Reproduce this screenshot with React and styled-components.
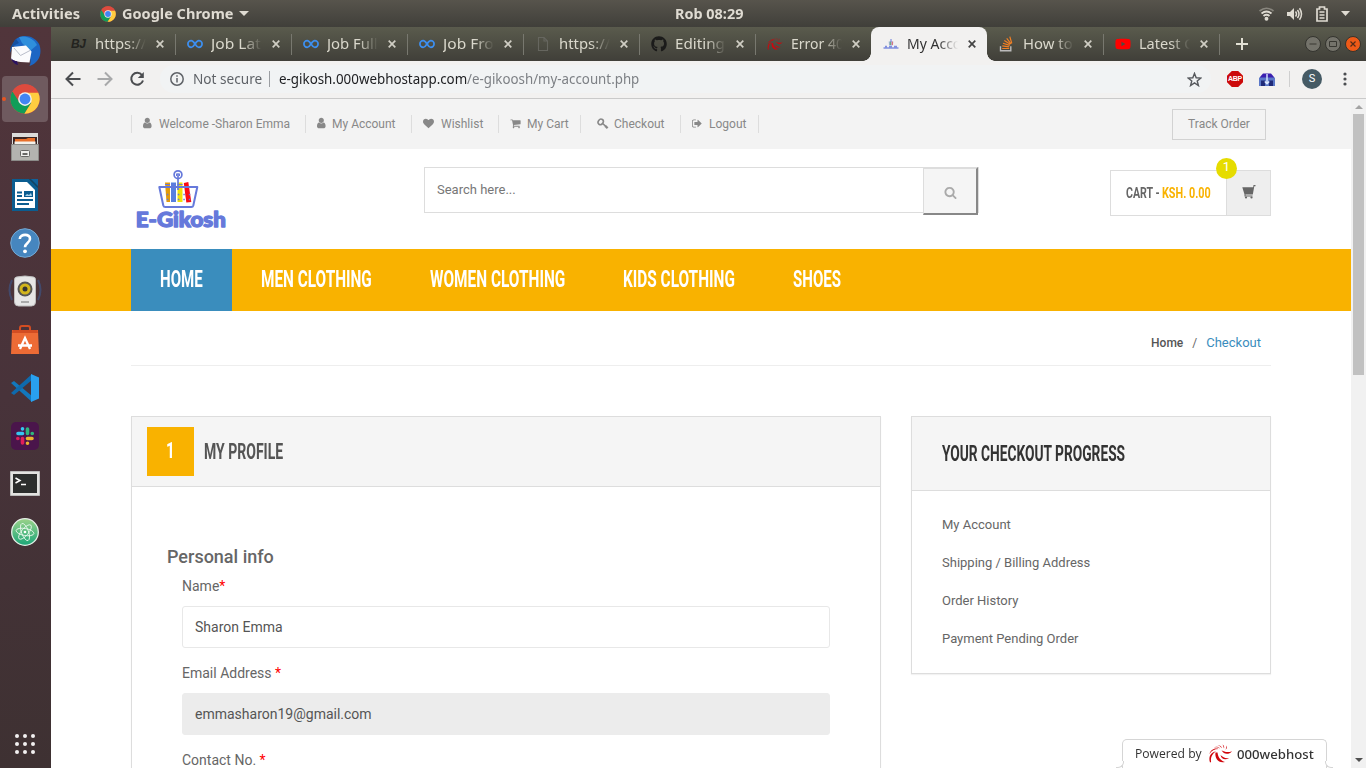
import React, { useLayoutEffect, useRef, useState } from "react";
import styled, { createGlobalStyle, css } from "styled-components";
import { FaGithub, FaYoutube } from "react-icons/fa";

const Global = createGlobalStyle`
  * { box-sizing: border-box; }
  html, body { margin: 0; padding: 0; }
  body { width: 1366px; height: 768px; overflow: hidden; background: #fff; font-family: Roboto, "Liberation Sans", sans-serif; color: #666; }
  svg { display: block; flex: none; }
`;

const ui = `"Noto Sans", "Open Sans", sans-serif`;

/* ---------- text squeezed horizontally to a given width ---------- */
const FitBox = styled.span`
  display: inline-block;
  flex: none;
  width: ${(p) => p.$w}px;
  white-space: nowrap;
`;
const FitInner = styled.span`
  display: inline-block;
  transform-origin: 0 50%;
`;
function Fit({ w, children }) {
  const ref = useRef(null);
  const [scale, setScale] = useState(1);
  useLayoutEffect(() => {
    setScale(w / ref.current.offsetWidth);
  }, [w]);
  return (
    <FitBox $w={w}>
      <FitInner ref={ref} style={{ transform: `scaleX(${scale})` }}>{children}</FitInner>
    </FitBox>
  );
}

/* ---------- desktop shell ---------- */
const Desktop = styled.div`
  width: 1366px;
  height: 768px;
  display: flex;
  flex-direction: column;
  overflow: hidden;
`;
const SystemBar = styled.header`
  height: 27px;
  flex: none;
  display: grid;
  grid-template-columns: 663px auto 1fr;
  align-items: center;
  background: linear-gradient(#57544c, #403f3a);
  color: #dfdbd2;
  font: 700 14px/26px ${ui};
  padding: 0 16px 0 12px;
`;
const BarGroup = styled.div`
  display: flex;
  align-items: center;
  justify-content: ${(p) => (p.$end ? "flex-end" : "flex-start")};
  height: 26px;
`;
const AppMenu = styled.div`
  display: flex;
  align-items: center;
  gap: 6px;
  margin-left: 20px;
`;
const Tray = styled.div`
  display: flex;
  align-items: center;
  gap: 12px;
`;
const Workspace = styled.div`
  flex: 1;
  min-height: 0;
  display: flex;
`;
const Dock = styled.nav`
  width: 51px;
  flex: none;
  display: flex;
  flex-direction: column;
  align-items: center;
  background: linear-gradient(#51353b, #48333a 50%, #3e3132);
  padding: 1px 1px 0 0;
`;
const DockItem = styled.div`
  width: 46px;
  height: 46px;
  margin-bottom: 2.1px;
  flex: none;
  display: flex;
  align-items: center;
  justify-content: center;
  border-radius: 4px;
  position: relative;
  ${(p) => p.$active && css`
    background: #6f5a5f;
    &::before {
      content: "";
      position: absolute;
      left: 0;
      top: 21px;
      width: 4px;
      height: 4px;
      border-radius: 50%;
      background: #e95420;
    }
  `}
`;
const AppsGrid = styled.div`
  margin-top: auto;
  margin-bottom: 14px;
  display: grid;
  grid-template-columns: repeat(3, 4px);
  gap: 4px;
`;
const Dot = styled.i`
  width: 4px;
  height: 4px;
  border-radius: 50%;
  background: #f3f1f1;
`;

/* ---------- browser ---------- */
const Browser = styled.main`
  flex: 1;
  min-width: 0;
  display: flex;
  flex-direction: column;
`;
const TabStrip = styled.div`
  height: 34px;
  flex: none;
  display: flex;
  align-items: center;
  background: linear-gradient(#5a5b4d, #403f39);
  padding: 0 5px 0 8px;
`;
const TabBox = styled.div`
  width: 116px;
  height: 34px;
  flex: none;
  display: flex;
  align-items: center;
  padding-left: 12px;
  position: relative;
  color: ${(p) => (p.$active ? "#333" : "#dad8cc")};
  font: 400 14px/34px ${ui};
  ${(p) => p.$line && css`
    &::after {
      content: "";
      position: absolute;
      right: -1px;
      top: 7px;
      width: 1px;
      height: 21px;
      background: #78786f;
    }
  `}
  ${(p) => p.$active && css`
    background: #f2f1f0;
    border-radius: 8px 8px 0 0;
    &::before, &::after {
      content: "";
      position: absolute;
      bottom: 0;
      width: 8px;
      height: 8px;
      background: radial-gradient(circle at 0 0, transparent 7.5px, #f2f1f0 8px);
    }
    &::before { left: -8px; }
    &::after { right: -8px; transform: scaleX(-1); }
  `}
`;
const TabTitle = styled.span`
  width: 51px;
  margin: 0 10px 0 8px;
  white-space: nowrap;
  -webkit-mask-image: linear-gradient(90deg, #000 62%, transparent 100%);
  mask-image: linear-gradient(90deg, #000 62%, transparent 100%);
`;
const WindowButtons = styled.div`
  display: flex;
  gap: 4px;
  margin-left: auto;
`;
const Toolbar = styled.div`
  height: 38px;
  flex: none;
  display: flex;
  align-items: center;
  background: #f2f1f0;
  border-bottom: 1px solid #cacaca;
  padding: 0 19px 1px 14px;
`;
const NavButtons = styled.div`
  display: flex;
  gap: 16px;
`;
const AddressBar = styled.div`
  flex: 1;
  height: 28px;
  margin: 0 16px 0 15px;
  padding: 0 9px 0 10px;
  display: flex;
  align-items: center;
  border-radius: 14px;
  background: #f1f3f4;
  color: #5f6368;
  font: 400 14px/28px ${ui};
`;
const SecureLabel = styled.span`
  display: flex;
  align-items: center;
  height: 16px;
  margin: 0 9px 0 9px;
  padding-right: 7px;
  border-right: 1px solid #9b9ea2;
`;
const Host = styled.span`
  color: #202124;
`;
const Path = styled.span`
  color: #7d8085;
  flex: 1;
`;
const Extensions = styled.div`
  display: flex;
  align-items: center;
`;
const AbpBadge = styled.div`
  width: 16px;
  height: 16px;
  background: #cc0a0a;
  color: #fff;
  font: 700 7px/16px "Liberation Sans", sans-serif;
  text-align: center;
  letter-spacing: -0.3px;
  clip-path: polygon(30% 0, 70% 0, 100% 30%, 100% 70%, 70% 100%, 30% 100%, 0 70%, 0 30%);
`;
const ToolboxIcon = styled.span`
  margin-left: 16px;
`;
const Avatar = styled.div`
  width: 20px;
  height: 20px;
  margin: 0 21px 0 12px;
  border-radius: 50%;
  background: #455a64;
  color: #fff;
  font: 400 11px/20px Roboto, sans-serif;
  text-align: center;
`;
const BarRule = styled.i`
  width: 1px;
  height: 16px;
  margin-left: 14px;
  background: #cfcfcf;
`;
const Viewport = styled.div`
  flex: 1;
  min-height: 0;
  display: flex;
`;
const Page = styled.div`
  width: 1300px;
  position: relative;
  overflow: hidden;
  background: #fff;
`;
const ScrollBar = styled.div`
  width: 15px;
  display: flex;
  flex-direction: column;
  align-items: center;
  justify-content: space-between;
  background: #f1f1f1;
`;
const ScrollTop = styled.div`
  display: flex;
  flex-direction: column;
  align-items: center;
  padding-top: 6px;
`;
const Thumb = styled.div`
  width: 11px;
  height: 261px;
  margin-top: 5px;
  background: #c1c1c1;
`;
const Arrow = styled.i`
  width: 0;
  height: 0;
  border: 4px solid transparent;
  ${(p) => (p.$up ? "border-top: 0; border-bottom-color: #a3a3a3;" : "border-bottom: 0; border-top-color: #505050; margin-bottom: 6px;")}
`;

/* ---------- shop page ---------- */
const Container = styled.div`
  width: 1140px;
  margin-left: 80px;
  display: flex;
`;
const TopStrip = styled.div`
  height: 50px;
  background: #f3f3f3;
`;
const TopLinks = styled.div`
  display: flex;
  align-items: center;
  height: 50px;
`;
const TopLink = styled.a`
  width: ${(p) => p.$w}px;
  height: 18px;
  display: flex;
  align-items: center;
  border-left: 1px solid #ddd;
  padding: 0 0 1px 11px;
  color: #888;
  font-size: 12px;
  white-space: nowrap;
  &:last-child { border-right: 1px solid #ddd; }
`;
const LinkIcon = styled.span`
  width: ${(p) => p.$w}px;
  flex: none;
  display: flex;
  justify-content: ${(p) => (p.$key ? "center" : "flex-start")};
  margin-top: ${(p) => (p.$key ? 0 : -1)}px;
`;
const TrackButton = styled.a`
  width: 94px;
  height: 31px;
  margin: 10px 5px 0 auto;
  border: 1px solid #d2d2d2;
  color: #888;
  font-size: 12px;
  line-height: 29px;
  text-align: center;
`;
const Masthead = styled.div`
  height: 100px;
`;
const LogoLink = styled.a`
  margin: 19px 0 0 2px;
`;
const Search = styled.div`
  display: flex;
  width: 555px;
  height: 46px;
  margin: 18px 0 0 196px;
  border: 1px solid #ddd;
`;
const SearchField = styled.div`
  flex: 1;
  padding-left: 12px;
  color: #777;
  font-size: 13px;
  line-height: 44px;
`;
const SearchButton = styled.div`
  width: 55px;
  height: 48px;
  margin: -1px 0 0 0;
  padding-top: 2px;
  display: flex;
  align-items: center;
  justify-content: center;
  background: #f5f5f5;
  border: 2px solid;
  border-color: #ddd #888 #888 #ddd;
  border-left-width: 1px;
`;
const Cart = styled.div`
  width: 161px;
  height: 46px;
  margin: 21px 0 0 auto;
  display: flex;
  border: 1px solid #ddd;
  position: relative;
`;
const CartText = styled.div`
  width: 116px;
  display: flex;
  gap: 2px;
  padding-left: 15px;
  border-right: 1px solid #ddd;
  color: #666;
  font-size: 15px;
  font-weight: 700;
  line-height: 44px;
`;
const Amount = styled.span`
  color: #f9b200;
`;
const CartIcon = styled.div`
  flex: 1;
  display: flex;
  justify-content: center;
  padding-top: 14px;
  background: #eee;
`;
const CartCount = styled.span`
  position: absolute;
  left: 105px;
  top: -13px;
  width: 21px;
  height: 21px;
  border-radius: 50%;
  background: #e6dc00;
  color: #fff;
  font-size: 13px;
  line-height: 18px;
  text-align: center;
`;
const MainNav = styled.div`
  height: 62px;
  background: #f9b200;
`;
const NavLink = styled.a`
  height: 62px;
  padding: 0 29px;
  background: ${(p) => (p.$active ? "#3a8dbd" : "transparent")};
  color: #fff;
  font-size: 23.5px;
  font-weight: 700;
  line-height: 60px;
`;
const Crumbs = styled.div`
  width: 1140px;
  height: 55px;
  margin-left: 80px;
  display: flex;
  justify-content: flex-end;
  align-items: center;
  padding: 9px 10px 0 0;
  border-bottom: 1px solid #eee;
  font-size: 12px;
`;
const CrumbHome = styled.span`
  font-weight: 500;
  color: #555;
`;
const Slash = styled.span`
  margin: 0 9px;
`;
const CrumbHere = styled.span`
  color: #3a8dbd;
  font-size: 13px;
  margin-top: -1px;
`;
const Columns = styled(Container)`
  margin-top: 50px;
  gap: 30px;
  align-items: flex-start;
`;
const Panel = styled.section`
  width: ${(p) => p.$w}px;
  height: ${(p) => p.$h}px;
  border: 1px solid #ddd;
  box-shadow: 0 1px 1px rgba(0, 0, 0, 0.05);
`;
const PanelHead = styled.div`
  height: ${(p) => p.$h}px;
  display: flex;
  align-items: center;
  padding: 0 0 1px ${(p) => p.$pad}px;
  border-bottom: 1px solid #ddd;
  background: #f5f5f5;
  color: ${(p) => p.$color};
  font-size: 22px;
  font-weight: 700;
`;
const Step = styled.span`
  width: 47px;
  height: 49px;
  margin: 1px 10px 0 0;
  background: #f9b200;
  color: #fff;
  line-height: 47px;
  text-align: center;
`;
const Form = styled.div`
  padding: 58px 50px 0 35px;
`;
const FormTitle = styled.h4`
  margin: 0;
  font-size: 18px;
  font-weight: 500;
  line-height: 24px;
  color: #666;
`;
const Field = styled.div`
  margin-left: 15px;
  height: 87px;
`;
const Label = styled.label`
  display: block;
  height: 37px;
  padding-top: 7px;
  font-size: 14px;
  line-height: 20px;
`;
const Star = styled.span`
  color: #f00;
`;
const Input = styled.div`
  width: 648px;
  height: 42px;
  padding-left: 12px;
  border: 1px solid ${(p) => (p.$disabled ? "#ececec" : "#e8e8e8")};
  border-radius: 3px;
  background: ${(p) => (p.$disabled ? "#ececec" : "#fff")};
  color: #555;
  font-size: 14px;
  line-height: 41px;
`;
const ProgressList = styled.div`
  display: flex;
  flex-direction: column;
  padding: 15px 0 0 30px;
  font-size: 13px;
  line-height: 38px;
`;
const Powered = styled.div`
  position: absolute;
  left: 1071px;
  bottom: 0;
  width: 205px;
  height: 29px;
  display: flex;
  align-items: center;
  padding-left: 12px;
  border: 1px solid #d5d5d5;
  border-bottom: 0;
  border-radius: 5px 5px 0 0;
  background: #fff;
  color: #333;
  font: 400 12.5px/28px "Open Sans", sans-serif;
  &::before, &::after {
    content: "";
    position: absolute;
    bottom: 0;
    width: 7px;
    height: 6px;
    background: #fff;
    border-bottom: 1px solid #d5d5d5;
  }
  &::before { left: -7px; border-right: 1px solid #d5d5d5; border-bottom-right-radius: 6px; }
  &::after { right: -7px; border-left: 1px solid #d5d5d5; border-bottom-left-radius: 6px; }
`;
const Swirl = styled.span`
  margin: 0 4px 0 6px;
`;
const Brand = styled.span`
  font: 500 13px/28px ${ui};
`;

/* ---------- icons ---------- */
function Chrome({ s }) {
  return (
    <svg width={s} height={s} viewBox="0 0 48 48">
      <circle cx="24" cy="24" r="23.5" fill="#dd4b3e" />
      <path d="M24 24 3.8 12A23.5 23.5 0 0 0 23 47.5L34 30Z" fill="#109d58" />
      <path d="M24 13.5H45A23.5 23.5 0 0 1 23 47.5L34 30Z" fill="#ffcd40" />
      <path d="M24 13.5H45A23.500 23.500 0 0 0 3.800 12L15 29Z" fill="#dd4b3e" />
      <circle cx="24" cy="24" r="11" fill="#f1f1f1" />
      <circle cx="24" cy="24" r="8.700" fill="#4285f4" />
    </svg>
  );
}
const Close = ({ color }) => (
  <svg width="8" height="8" viewBox="0 0 8 8"><path d="m.7.7 6.600 6.600M7.300.7.7 7.300" stroke={color} strokeWidth="1.7" /></svg>
);
const Infinity8 = () => (
  <svg width="16" height="16" viewBox="0 0 16 16"><path d="M8 8C6.500 5.600 5.600 4.700 4.200 4.700a3.300 3.300 0 0 0 0 6.600C5.600 11.300 6.500 10.400 8 8s2.400-3.300 3.800-3.300a3.300 3.300 0 0 1 0 6.600C10.400 11.300 9.500 10.400 8 8Z" fill="none" stroke="#3d8ff0" strokeWidth="1.700" /></svg>
);
const BJ = () => (
  <svg width="16" height="16" viewBox="0 0 16 16"><text x="0" y="12" fontSize="12" fontWeight="700" fontStyle="italic" fontFamily="Liberation Sans, sans-serif" fill="#23231f" textLength="15">BJ</text></svg>
);
const Doc = () => (
  <svg width="16" height="16" viewBox="0 0 16 16"><path d="M3.500 1.500h5.500l3.500 3.500v9.500h-9zM9 1.500v3.500h3.500" fill="none" stroke="#66665f" strokeWidth="1.100" /></svg>
);
const HostSwirl = ({ w, h }) => (
  <svg width={w} height={h} viewBox="0 0 24 20" fill="#d0060c">
    <path d="M23.500 7.200C20 8.500 16.500 8.500 13 6.300 15.500 11 20.500 10.800 23.500 7.200Z" />
    <path d="M7 8.500C6 14 10 19.800 16.500 18 12.500 17 9.500 13.500 9 8.500Z" />
    <path d="M12 11C13 15.500 17 16.500 20.500 14 17 14.600 14.500 13.500 12 11Z" />
    <path d="M1.500 18.500C-.5 12 3 8 7.500 7.500 4 9.500 1.800 13 2.600 18Z" />
    <path d="M1 10C2 6 6 3.500 10 5 6 5 3 6.500 1 10ZM5 3.500c2.500-1.500 5-1 6.500 1C9 3 7.500 3.200 5 3.500ZM9 1.200c2.500 0 4 1.200 4.500 3C12 2.500 11 1.800 9 1.200ZM14 .5c1.500 1 2 2.500 1.500 4C15 3 14.800 2 14 .5ZM18 1.500c1 1.500.5 3.200-1 4.200.800-1.500 1-2.700 1-4.200Z" />
  </svg>
);
const SmallShop = () => (
  <svg width="16" height="16" viewBox="0 0 16 16">
    <path d="M5.500 5.500h5l-.6 4H6.100z" fill="#b9c2ee" /><path d="M6.700 5.500h1V9h-1z" fill="#4da05b" /><path d="M8.700 5.500h1V9h-1z" fill="#dd5a4f" />
    <path d="M8 3v3" stroke="#6679db" /><path d="M.5 12h15M2 10.500h2m2 0h3m2 0h3" stroke="#6679db" strokeWidth="1.500" opacity=".8" />
  </svg>
);
const StackOverflow = () => (
  <svg width="16" height="16" viewBox="0 0 16 16" fill="none"><path d="M1.500 10.300v4.500h10.300v-4.500" stroke="#bcbbbb" strokeWidth="1.400" /><path d="M3.200 12.500h7M3.300 9.900l6.900.9M4 7.200l6.700 2.200M5.300 4.600l6 3.700M7.700 2.300l4.400 5.500M10.800.7l2 6.700" stroke="#f48024" strokeWidth="1.200" /></svg>
);
const DownTri = ({ w = 9 }) => (
  <svg width={w} height="5" viewBox="0 0 10 5" preserveAspectRatio="none"><path d="M0 0h10L5 5z" fill="#dfdbd2" /></svg>
);
const faPaths = {
  user: "M1280 1399q0 109-62.5 187t-150.5 78h-854q-88 0-150.5-78t-62.5-187q0-85 8.5-160.5t31.5-152 58.5-131 94-89 134.5-34.5q131 128 313 128t313-128q76 0 134.5 34.5t94 89 58.5 131 31.5 152 8.5 160.5zm-256-887q0 159-112.5 271.5t-271.5 112.5-271.5-112.5-112.5-271.5 112.5-271.5 271.5-112.5 271.5 112.5 112.5 271.5z",
  heart: "M896 1664q-26 0-44-18l-624-602q-10-8-27.500-26T145 952.500 77 855 23.500 734 0 596q0-220 127-344t351-124q62 0 126.500 21.500t120 58T820 276t76 68q36-36 76-68t95.500-68.500 120-58T1314 128q224 0 351 124t127 344q0 221-229 450l-623 600q-18 18-44 18z",
  cart: "M704 1536q0 52-38 90t-90 38-90-38-38-90 38-90 90-38 90 38 38 90zm896 0q0 52-38 90t-90 38-90-38-38-90 38-90 90-38 90 38 38 90zm128-1088v512q0 24-16.5 42.5t-40.5 21.5l-1044 122q13 60 13 70 0 16-24 64h920q26 0 45 19t19 45-19 45-45 19h-1024q-26 0-45-19t-19-45q0-11 8-31.5t16-36 21.5-40 15.5-29.5l-177-823h-204q-26 0-45-19t-19-45 19-45 45-19h256q16 0 28.5 6.5t19.500 15.500 13 24.500 8 26 5.500 29.500 4.500 26h1201q26 0 45 19t19 45z",
  out: "M640 1440q0 4 1 20t.5 26.500-3 23.500-10 19.500-20.500 6.500h-320q-119 0-203.500-84.500T0 1248V544q0-119 84.500-203.500T288 256h320q13 0 22.500 9.500T640 288q0 4 1 20t.5 26.500-3 23.500-10 19.500-20.500 6.500H288q-66 0-113 47t-47 113v704q0 66 47 113t113 47h312l11.500 1 11.500 3 8 5.500 7 9 2 13.500zm928-544q0 26-19 45l-544 544q-19 19-45 19t-45-19-19-45v-288H448q-26 0-45-19t-19-45V704q0-26 19-45t45-19h448V352q0-26 19-45t45-19 45 19l544 544q19 19 19 45z",
  search: "M1216 832q0-185-131.500-316.500t-316.500-131.500-316.500 131.500-131.500 316.500 131.500 316.500 316.500 131.500 316.500-131.500 131.500-316.500zm512 832q0 52-38 90t-90 38q-54 0-90-38l-343-342q-179 124-399 124-143 0-273.500-55.500t-225-150-150-225-55.500-273.500 55.500-273.500 150-225 225-150 273.500-55.500 273.500 55.500 225 150 150 225 55.500 273.500q0 220-124 399l343 343q37 37 37 90z",
};
function Fa({ name, s = 12, color = "#888" }) {
  if (name === "key")
    return (
      <svg width="12" height="12" viewBox="0 0 12 12" fill="none" stroke={color}>
        <ellipse cx="3.700" cy="3.900" rx="2.400" ry="2.900" transform="rotate(35 3.700 3.900)" strokeWidth="1.600" />
        <path d="m5.700 5.600 4.800 4.200M7.900 9.300l1.600-1.700M9.300 10.500l1.600-1.700" strokeWidth="1.500" />
      </svg>
    );
  return <svg width={s} height={s} viewBox="0 0 1792 1792"><path d={faPaths[name]} fill={color} /></svg>;
}
const Logo = () => (
  <svg width="95" height="62" viewBox="0 0 95 62">
    <g transform="translate(4.800 0)">
      <path d="M27.200 14.500h5V34h-3.500z" fill="#e39b0b" /><path d="M33.200 14.500h5V34h-5z" fill="#5680e0" />
      <path d="M39.700 14.500h5V34h-5z" fill="#f1e106" /><path d="m46 15 4.500-1 3 20-5 .5z" fill="#fb0c12" />
      <path d="M27.200 16.500h5m1 0h5m1.500 0h5" stroke="#6679db" strokeWidth="1" />
      <g fill="none" stroke="#6679db">
        <path d="M21.500 19h38l-4 18.500q-.4 1.500-2 1.500H27.500q-1.600 0-2-1.500Z" strokeWidth="2" strokeLinejoin="round" />
        <path d="M29 26.500h24M29 31.500h24" strokeWidth="1.400" strokeDasharray="1.500 4" />
        <circle cx="40.200" cy="6.700" r="3.900" strokeWidth="1.700" /><path d="M40.200 6v16" strokeWidth="1.700" /><path d="M38.700 8V5.800h3V8" strokeWidth="1" />
      </g>
    </g>
    <text x="2.800" y="58.500" fontFamily="Lato, sans-serif" fontWeight="900" fontSize="20" fill="#6679db" stroke="#6679db" strokeWidth="1.300" strokeLinejoin="round" textLength="90" lengthAdjust="spacingAndGlyphs">E-Gikosh</text>
  </svg>
);

const Thunderbird = () => (
  <svg width="32" height="32" viewBox="0 0 32 32">
    <path d="M7 4C14-2 27 1 30.500 10c3 9-1 18-10 21 2-4 1-8-2-12L4 11C4 8 5 6 7 4Z" fill="#1c66c4" />
    <path d="M10 2C18 0 25 4 28 10l-7 6-8-8Z" fill="#2f8fdc" />
    <path d="M7 4C3 9 1 12 1 18l3-7 6-3Z" fill="#1550a0" />
    <path d="m3 12 14-1.500 5.500 6-2 11-9-.500Q5 26 2 24Z" fill="#fbfbfd" />
    <path d="m5 13 6.500 7.500 9.500-5" fill="none" stroke="#b9bdca" strokeWidth="1" />
    <path d="M2 23q3 4 6 3l1 4Q4 29 2 23Z" fill="#2a1262" />
  </svg>
);
const Files = () => (
  <svg width="28" height="30" viewBox="0 0 28 30">
    <path d="M1 1h26v11H1z" fill="#dcdcda" /><path d="M2 5h24v8H2z" fill="#3b2522" /><path d="M4 7h11l2-1h7v7H4z" fill="#e8702b" /><path d="M3.500 9.500h21v3h-21z" fill="#f4f1ea" />
    <path d="M.5 12.500h27v16h-27z" fill="#b3b3b0" stroke="#8b8b88" /><rect x="9.500" y="18.500" width="9" height="6" rx="1" fill="#eee" stroke="#666" /><path d="M11.500 22h5" stroke="#666" strokeWidth="2" />
  </svg>
);
const Writer = () => (
  <svg width="28" height="32" viewBox="0 0 28 32">
    <path d="M1 0h17l9 9v23H1z" fill="#0b5d90" /><path d="M18 0h9v9z" fill="#0d4668" /><path d="M20 0h7v7z" fill="#11629b" /><path d="M4 3h12l8 8v18H4z" fill="#fff" />
    <path d="M6 13.500h5M6 17h5M6 21h16M6 25h12" stroke="#0b5d90" strokeWidth="2" /><path d="M13 12h9v6h-9z" fill="#0b5d90" /><path d="m14 17 2-2 2 1 2-2 1 3z" fill="#abd2ea" />
  </svg>
);
const Help = () => (
  <svg width="30" height="30" viewBox="0 0 30 30">
    <circle cx="15" cy="15" r="14.300" fill="#4686bf" stroke="#75a9d4" strokeWidth="1" />
    <path d="M9.800 11C10 5.500 20.500 5.500 20 11c-.3 4-5 4-5 8.300" fill="none" stroke="#fff" strokeWidth="2.600" /><circle cx="15" cy="23.300" r="1.900" fill="#fff" />
  </svg>
);
const Speaker = () => (
  <svg width="34" height="32" viewBox="0 0 34 32">
    <path d="M4 5q-5 10 0 20M30 5q5 10 0 20" fill="none" stroke="#3e5280" strokeWidth="2" opacity=".7" />
    <path d="M8.500 2q8.500-2 17 0 2 0 2 3v22q0 4-4 4h-13q-4 0-4-4V5q0-3 2-3Z" fill="#e6e6e6" stroke="#bcbcbc" />
    <circle cx="17" cy="14" r="7.500" fill="#555" /><circle cx="17" cy="14" r="5.500" fill="#d2b51c" /><circle cx="17" cy="14" r="2.500" fill="#343434" /><path d="M13 27h8" stroke="#aaa" strokeWidth="2" />
  </svg>
);
const Software = () => (
  <svg width="30" height="30" viewBox="0 0 30 30">
    <path d="M10 8V3q0-2 2-2h6q2 0 2 2v5" fill="none" stroke="#d34d22" strokeWidth="2" /><path d="M2 5h26l1 24H1z" fill="#ed6b35" /><path d="M2.500 5h25l.5 3H2z" fill="#d34d22" />
    <path d="m10 24 5-11 5 11M8 20.500h14" fill="none" stroke="#fff" strokeWidth="2.300" />
  </svg>
);
const Code = () => (
  <svg width="28" height="28" viewBox="0 0 28 28">
    <path d="m0 9 3-2 18 15v6Z" fill="#1278bd" /><path d="m0 19 3 2L21 6V0Z" fill="#0f6aad" /><path d="m20 0 8 3.500v21L20 28z" fill="#29a0ee" />
  </svg>
);
const Slack = () => (
  <svg width="28" height="28" viewBox="0 0 28 28">
    <rect width="28" height="28" rx="5" fill="#4a154b" />
    <g strokeWidth="3.600" strokeLinecap="round">
      <path d="M7 11.500h4.500M11.500 6.800v.1" stroke="#36c5f0" /><path d="M16.500 7v4.500M21.200 11.500h.1" stroke="#2eb67d" />
      <path d="M16.500 16.500H21M16.500 21.200v.1" stroke="#ecb22e" /><path d="M11.500 16.500V21M6.800 16.500h.1" stroke="#e01e5a" />
    </g>
  </svg>
);
const Terminal = () => (
  <svg width="30" height="25" viewBox="0 0 30 25"><path d="M.5.5h29v24H.5z" fill="#e2e2e0" stroke="#bbb" /><path d="M3 3h24v19H3z" fill="#2c2e2d" /><path d="m5.500 7 4.500 2.500-4.500 2.500M11 13.500h5" fill="none" stroke="#fff" strokeWidth="1.500" /></svg>
);
const Atom = () => (
  <svg width="28" height="28" viewBox="0 0 28 28">
    <defs><linearGradient id="atom" x2="0" y2="1"><stop stopColor="#9bd38a" /><stop offset="1" stopColor="#1ba678" /></linearGradient></defs>
    <circle cx="14" cy="14" r="13.300" fill="url(#atom)" stroke="#e5efe7" strokeWidth="1.300" />
    <g fill="none" stroke="#e5f6e9" strokeWidth=".9"><ellipse cx="14" cy="14" rx="9" ry="3.500" transform="rotate(10 14 14)" /><ellipse cx="14" cy="14" rx="9" ry="3.500" transform="rotate(70 14 14)" /><ellipse cx="14" cy="14" rx="9" ry="3.500" transform="rotate(130 14 14)" /></g><circle cx="14" cy="14" r="1.300" fill="#fff" />
  </svg>
);
const WinButton = ({ kind }) => (
  <svg width="16" height="16" viewBox="0 0 16 16">
    <circle cx="8" cy="8" r="7.500" fill={kind === "close" ? "#ee5a18" : "#74736b"} stroke="#34342f" />
    {kind === "min" && <path d="M4.500 8h7" stroke="#383832" />}
    {kind === "max" && <path d="M4.500 5.500h7v5h-7z" fill="none" stroke="#383832" />}
    {kind === "close" && <path d="m5.500 5.500 5 5m0-5-5 5" stroke="#542b18" strokeWidth="1.200" />}
  </svg>
);

/* ---------- data ---------- */
const tabs = [
  { icon: <BJ />, title: "https://", w: 51 },
  { icon: <Infinity8 />, title: "Job Lat", w: 50 },
  { icon: <Infinity8 />, title: "Job Full", w: 51 },
  { icon: <Infinity8 />, title: "Job Fro", w: 51 },
  { icon: <Doc />, title: "https://", w: 51 },
  { icon: <FaGithub size={16} color="#1b1b1a" />, title: "Editing", w: 50 },
  { icon: <HostSwirl w={16} h={14} />, title: "Error 40", w: 53 },
  { icon: <SmallShop />, title: "My Acco", w: 54, active: true },
  { icon: <StackOverflow />, title: "How to", w: 50 },
  { icon: <FaYoutube size={16} color="#f00" />, title: "Latest C", w: 54 },
];
const dock = [Thunderbird, null, Files, Writer, Help, Speaker, Software, Code, Slack, Terminal, Atom];
const topLinks = [
  ["user", "Welcome -Sharon Emma", 174, 16],
  ["user", "My Account", 106, 15],
  ["heart", "Wishlist", 87, 18],
  ["cart", "My Cart", 82, 17],
  ["key", "Checkout", 100, 22],
  ["out", "Logout", 79, 17],
];
const navLinks = [["HOME", 43], ["MEN CLOTHING", 111], ["WOMEN CLOTHING", 135], ["KIDS CLOTHING", 112], ["SHOES", 48]];

export default function App() {
  return (
    <Desktop>
      <Global />
      <SystemBar>
        <BarGroup>
          <Fit w={68}>Activities</Fit>
          <AppMenu><Chrome s={16} /><Fit w={111}>Google Chrome</Fit><DownTri w={10} /></AppMenu>
        </BarGroup>
        <Fit w={68}>Rob 08:29</Fit>
        <BarGroup $end>
          <Tray>
            <svg width="15" height="14" viewBox="0 0 15 14" fill="none" stroke="#dfdbd2" strokeWidth="1.700">
              <path d="M.5 4q7-5.500 14 0" opacity=".4" /><path d="M2.500 6.500q5-4 10 0M4.500 9q3-2.500 6 0" /><circle cx="7.500" cy="11.800" r="1.100" fill="#dfdbd2" />
            </svg>
            <svg width="17" height="14" viewBox="0 0 17 14" fill="none" stroke="#dfdbd2" strokeWidth="1.500">
              <path d="M1 5h3l4-4v12L4 9H1z" fill="#dfdbd2" stroke="none" /><path d="M9.500 4.500q2 2.500 0 5M11.500 3q3 4 0 8M13.500 1.200q4 5.800 0 11.600" />
            </svg>
            <svg width="14" height="16" viewBox="0 0 14 16" fill="none" stroke="#dfdbd2" strokeWidth="1.700">
              <path d="M2 3h2.500V1h5v2H12v12H2zM4.500 6h5M4.500 9h5M4.500 12h5" />
            </svg>
            <DownTri />
          </Tray>
        </BarGroup>
      </SystemBar>
      <Workspace>
        <Dock>
          {dock.map((Icon, i) => (
            <DockItem key={i} $active={!Icon}>{Icon ? <Icon /> : <Chrome s={30} />}</DockItem>
          ))}
          <AppsGrid>{Array.from({ length: 9 }, (_, i) => <Dot key={i} />)}</AppsGrid>
        </Dock>
        <Browser>
          <TabStrip>
            {tabs.map((t, i) => (
              <TabBox key={i} $active={t.active} $line={!t.active && i !== 6}>
                {t.icon}
                <TabTitle><Fit w={t.w}>{t.title}</Fit></TabTitle>
                <Close color={t.active ? "#444" : "#d0cec4"} />
              </TabBox>
            ))}
            <svg width="46" height="14" viewBox="0 0 46 14"><path d="M17 7h12M23 1v12" stroke="#e2e0d4" strokeWidth="2" /></svg>
            <WindowButtons><WinButton kind="min" /><WinButton kind="max" /><WinButton kind="close" /></WindowButtons>
          </TabStrip>
          <Toolbar>
            <NavButtons>
              <svg width="16" height="16" viewBox="0 0 16 16" fill="none" stroke="#4b4d50" strokeWidth="2"><path d="M15.500 8H2M8 1.500 1.500 8 8 14.500" /></svg>
              <svg width="16" height="16" viewBox="0 0 16 16" fill="none" stroke="#a8a9aa" strokeWidth="2"><path d="M.5 8H14M8 1.500 14.500 8 8 14.500" /></svg>
              <svg width="16" height="16" viewBox="0 0 16 16" fill="none" stroke="#4b4d50" strokeWidth="2"><path d="M13 4A6 6 0 1 0 14 9.500" /><path d="M14.800 1v6h-6z" fill="#4b4d50" stroke="none" /></svg>
            </NavButtons>
            <AddressBar>
              <svg width="14" height="14" viewBox="0 0 14 14" fill="none" stroke="#5f6368" strokeWidth="1.500"><circle cx="7" cy="7" r="6.200" /><path d="M7 6v4.500M7 3.300v1.500" /></svg>
              <SecureLabel><Fit w={69}>Not secure</Fit></SecureLabel>
              <Host><Fit w={188}>e-gikosh.000webhostapp.com</Fit></Host>
              <Path><Fit w={172}>/e-gikoosh/my-account.php</Fit></Path>
              <svg width="15" height="15" viewBox="0 0 16 16"><path d="m8 1.500 1.800 4.700 5 .3-3.900 3.100 1.300 4.900L8 11.700l-4.200 2.800 1.300-4.900L1.200 6.500l5-.3z" fill="none" stroke="#56595d" strokeWidth="1.500" /></svg>
            </AddressBar>
            <Extensions>
              <AbpBadge>ABP</AbpBadge>
              <ToolboxIcon>
                <svg width="16" height="16" viewBox="0 0 16 16"><path d="M1 6 4 2.500h8L15 6v2H1z" fill="#3a1fb0" /><path d="M0 6.500h16V15H0z" fill="#5b78c8" /><path d="M2 15V9.500h4V15m4 0V9.500h4V15" fill="#1f2a78" /><path d="M8 3v9.500M5.800 10.500 8 12.800l2.200-2.300" fill="none" stroke="#dce8ff" strokeWidth="1.400" /></svg>
              </ToolboxIcon>
              <BarRule />
              <Avatar>S</Avatar>
              <svg width="4" height="14" viewBox="0 0 4 14" fill="#4b4d50"><circle cx="2" cy="2" r="1.600" /><circle cx="2" cy="7" r="1.600" /><circle cx="2" cy="12" r="1.600" /></svg>
            </Extensions>
          </Toolbar>
          <Viewport>
            <Page>
              <TopStrip>
                <Container>
                  <TopLinks>
                    {topLinks.map(([icon, text, w, iw]) => (
                      <TopLink key={text} $w={w}><LinkIcon $w={iw} $key={icon === "key"}><Fa name={icon} s={icon === "user" ? 12 : 11} /></LinkIcon>{text}</TopLink>
                    ))}
                  </TopLinks>
                  <TrackButton>Track Order</TrackButton>
                </Container>
              </TopStrip>
              <Masthead>
                <Container>
                  <LogoLink><Logo /></LogoLink>
                  <Search>
                    <SearchField>Search here...</SearchField>
                    <SearchButton><Fa name="search" s={13} color="#aaa" /></SearchButton>
                  </Search>
                  <Cart>
                    <CartText><Fit w={34}>CART -</Fit><Amount><Fit w={49}>KSH. 0.00</Fit></Amount></CartText>
                    <CartIcon>
                      <svg width="14" height="14" viewBox="0 0 14 14" fill="#666"><path d="M13.500 0v1.200h-1.200L10.800 9.500H3.500v.9h7v1H2.500V9.500L.3 2.300h10.900L11.500 0z" /><circle cx="4" cy="12.500" r="1.100" /><circle cx="9.500" cy="12.500" r="1.100" /></svg>
                    </CartIcon>
                    <CartCount>1</CartCount>
                  </Cart>
                </Container>
              </Masthead>
              <MainNav>
                <Container>
                  {navLinks.map(([text, w], i) => <NavLink key={text} $active={i === 0}><Fit w={w}>{text}</Fit></NavLink>)}
                </Container>
              </MainNav>
              <Crumbs><CrumbHome>Home</CrumbHome><Slash>/</Slash><CrumbHere>Checkout</CrumbHere></Crumbs>
              <Columns>
                <Panel $w={750} $h={500}>
                  <PanelHead $h={70} $pad={15} $color="#555"><Step><Fit w={9}>1</Fit></Step><Fit w={79}>MY PROFILE</Fit></PanelHead>
                  <Form>
                    <FormTitle>Personal info</FormTitle>
                    <Field><Label>Name<Star>*</Star></Label><Input>Sharon Emma</Input></Field>
                    <Field><Label>Email Address <Star>*</Star></Label><Input $disabled>emmasharon19@gmail.com</Input></Field>
                    <Field><Label>Contact No. <Star>*</Star></Label></Field>
                  </Form>
                </Panel>
                <Panel $w={360} $h={258}>
                  <PanelHead $h={74} $pad={30} $color="#333"><Fit w={183}>YOUR CHECKOUT PROGRESS</Fit></PanelHead>
                  <ProgressList>
                    <span>My Account</span><span>Shipping / Billing Address</span><span>Order History</span><span>Payment Pending Order</span>
                  </ProgressList>
                </Panel>
              </Columns>
              <Powered>
                <Fit w={67}>Powered by</Fit><Swirl><HostSwirl w={25} h={20} /></Swirl><Brand><Fit w={77}>000webhost</Fit></Brand>
              </Powered>
            </Page>
            <ScrollBar>
              <ScrollTop><Arrow $up /><Thumb /></ScrollTop>
              <Arrow />
            </ScrollBar>
          </Viewport>
        </Browser>
      </Workspace>
    </Desktop>
  );
}
